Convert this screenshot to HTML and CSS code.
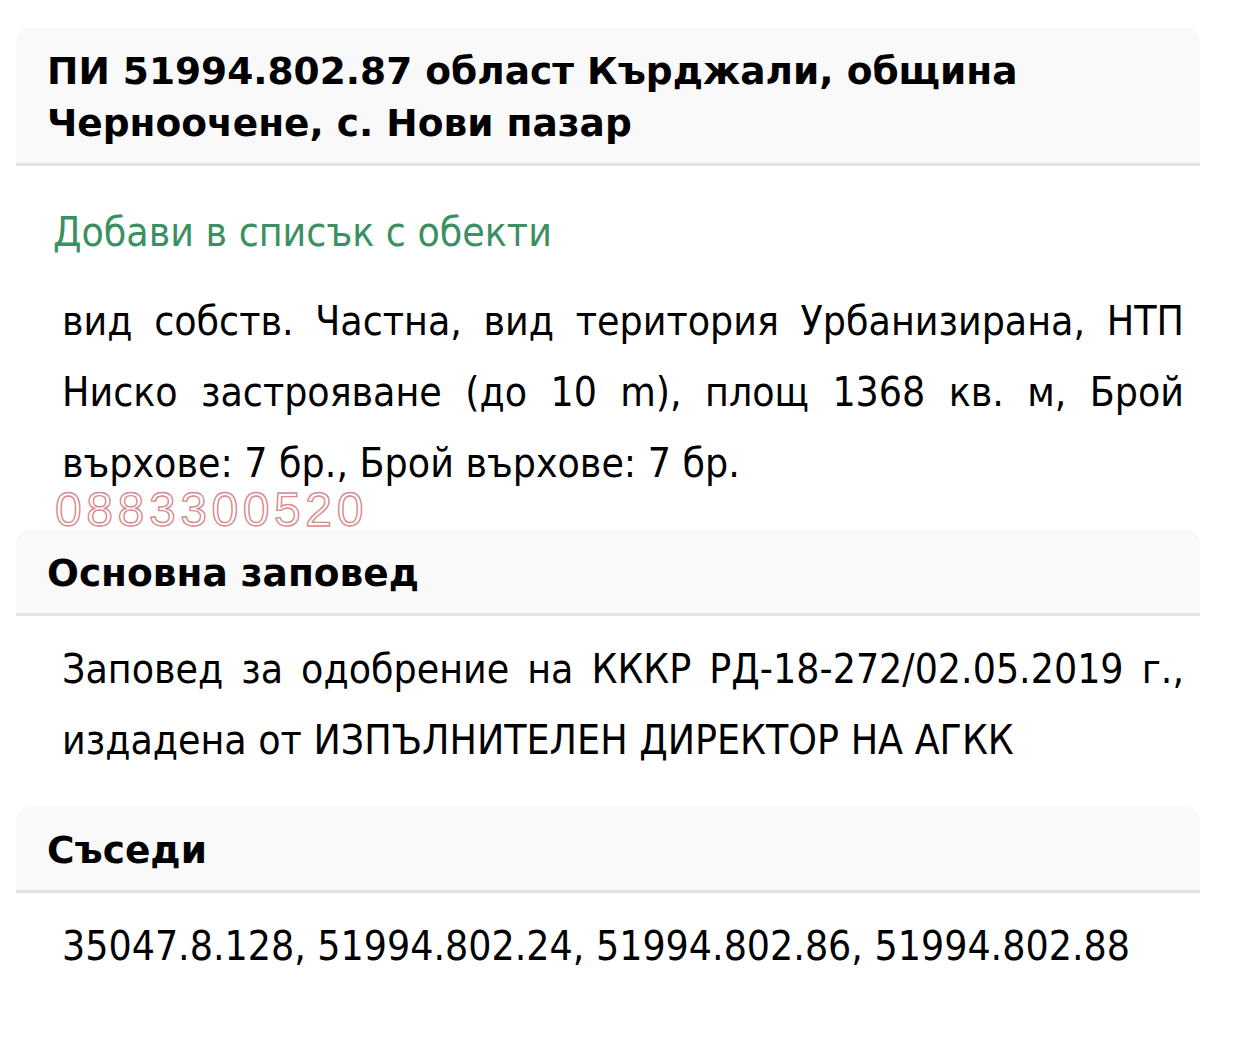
FILE: index.html
```html
<!DOCTYPE html>
<html lang="bg">
<head>
<meta charset="utf-8">
<title>ПИ 51994.802.87</title>
<link rel="stylesheet" href="styles.css">
</head>
<body>
<main class="page">
  <section class="block">
    <h1 class="block-head">ПИ 51994.802.87 област Кърджали, община Черноочене, с. Нови пазар</h1>
    <a class="add-link" href="#">Добави в списък с обекти</a>
    <p class="text text-first">вид собств. Частна, вид територия Урбанизирана, НТП Ниско застрояване (до 10 m), площ 1368 кв. м, Брой върхове: 7 бр., Брой върхове: 7 бр.</p>
    <div class="phone">0883300520</div>
  </section>
  <section class="block">
    <h2 class="block-head">Основна заповед</h2>
    <p class="text">Заповед за одобрение на КККР РД-18-272/02.05.2019 г., издадена от ИЗПЪЛНИТЕЛЕН ДИРЕКТОР НА АГКК</p>
  </section>
  <section class="block block-last">
    <h2 class="block-head">Съседи</h2>
    <p class="text">35047.8.128, 51994.802.24, 51994.802.86, 51994.802.88</p>
  </section>
</main>
</body>
</html>
```

FILE: styles.css
```css
html, body {
  margin: 0;
  padding: 0;
  background: #ffffff;
}

body {
  font-family: "DejaVu Sans Condensed", "DejaVu Sans", sans-serif;
  color: #000000;
}

.page {
  width: 1184px;
  margin-left: 16px;
  padding-top: 28px;
}

.block-head {
  margin: 0;
  padding: 17px 31px 14px;
  background: #f9f9f9;
  border-radius: 14px 14px 0 0;
  border-bottom: 3px solid #e1e3e8;
  font-family: "DejaVu Sans", sans-serif;
  font-size: 37.5px;
  line-height: 52px;
  font-weight: bold;
}

.add-link {
  display: block;
  margin: 40px 0 0 37px;
  font-size: 40.6px;
  line-height: 52px;
  color: #3b9062;
  text-decoration: none;
}

.text {
  margin: 18px 0 0 0;
  padding: 0 16px 0 46px;
  font-size: 40.6px;
  line-height: 71px;
  text-align: justify;
}

.text-first {
  margin-top: 28px;
}

.phone {
  margin: -9px 0 0 39px;
  height: 40px;
  font-family: "Liberation Sans", Arial, sans-serif;
  font-size: 48px;
  line-height: 40px;
  letter-spacing: 4.6px;
  color: transparent;
  -webkit-text-stroke: 1.4px #d98a8c;
}

.block + .block {
  margin-top: 31px;
}

.block:nth-child(2) {
  margin-top: 0;
}
```
